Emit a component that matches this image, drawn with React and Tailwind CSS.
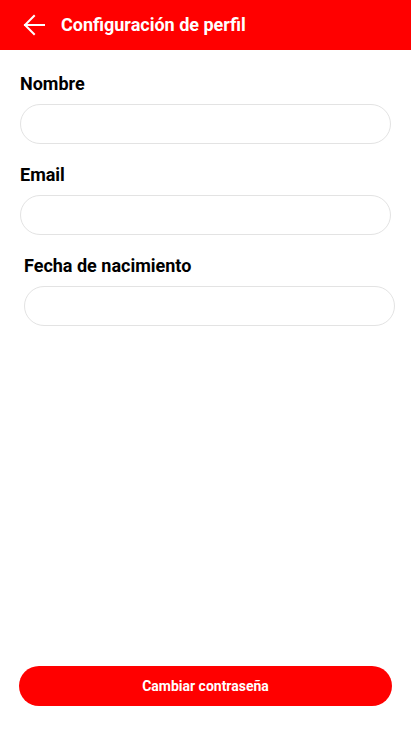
export default function App() {
  const font = { fontFamily: "Roboto, 'Noto Sans', sans-serif" };
  return (
    <div className="w-[411px] h-[731px] bg-white flex flex-col overflow-hidden" style={font}>
      <header className="h-[50px] bg-[#ff0000] flex items-center shrink-0">
        <svg className="ml-[23px]" width="22" height="22" viewBox="0 0 22 22" fill="none" stroke="white" strokeWidth="2" strokeLinecap="square">
          <path d="M2 11H21" />
          <path d="M11 2L2 11L11 20" />
        </svg>
        <h1 className="ml-[16px] text-white font-bold text-[18px] leading-none">Configuración de perfil</h1>
      </header>
      <main className="flex-1 flex flex-col">
        <div className="px-5 pt-[23px]">
          <label className="block text-[18px] leading-[22px] font-bold text-black">Nombre</label>
          <input className="mt-[9px] block w-full h-[40px] rounded-full border border-[#e3e3e3] px-4 outline-none" />
        </div>
        <div className="px-5 pt-[20px]">
          <label className="block text-[18px] leading-[22px] font-bold text-black">Email</label>
          <input className="mt-[9px] block w-full h-[40px] rounded-full border border-[#e3e3e3] px-4 outline-none" />
        </div>
        <div className="pl-6 pr-4 pt-[20px]">
          <label className="block text-[18px] leading-[22px] font-bold text-black">Fecha de nacimiento</label>
          <input className="mt-[9px] block w-full h-[40px] rounded-full border border-[#e3e3e3] px-4 outline-none" />
        </div>
        <div className="mt-auto px-[19px] pb-[25px]">
          <button className="w-full h-[40px] rounded-full bg-[#ff0000] text-white text-[14px] font-bold">Cambiar contraseña</button>
        </div>
      </main>
    </div>
  );
}
